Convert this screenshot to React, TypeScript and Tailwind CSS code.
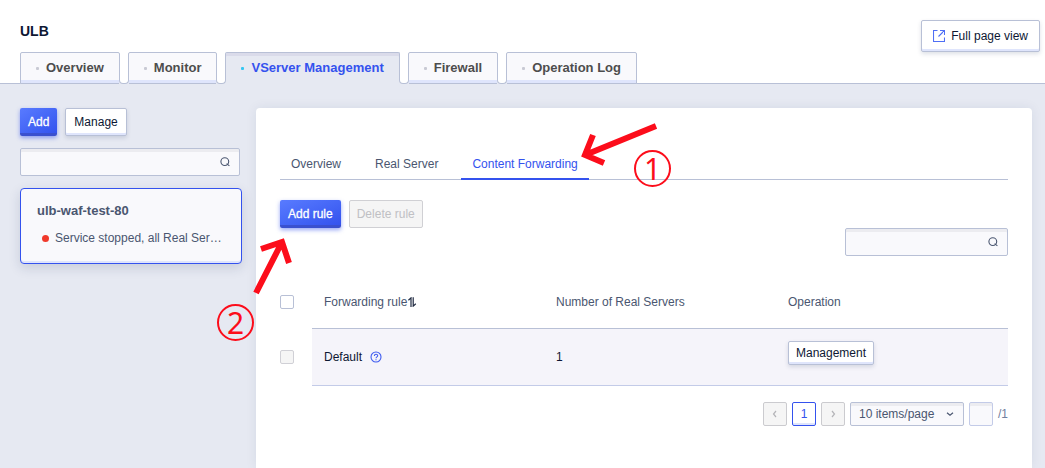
import { Fragment } from 'react';

const serverTabs = ['Overview', 'Monitor', 'VServer Management', 'Firewall', 'Operation Log'];
const detailTabs = ['Overview', 'Real Server', 'Content Forwarding'];

const primaryButton =
  'h-7 rounded-[2px] border-b-[3px] border-[#3a50cf] bg-linear-to-br from-[#597bff] to-[#3452ee] px-2 pt-[3px] font-medium text-white shadow-[0_2px_4px_rgba(52,82,238,0.5)] [-webkit-text-stroke:0.3px_white]';
const plainButton =
  'rounded-[2px] border border-[#b8c0d6] bg-white text-[#0d1733] shadow-[inset_0_-2px_0_#dfe5fc,0_2px_4px_rgba(30,45,90,0.15)]';

function SearchIcon() {
  return (
    <svg viewBox="0 0 12 12" className="size-3" fill="none" stroke="#4a5670" strokeWidth="1.1" aria-hidden="true">
      <circle cx="5.8" cy="5.6" r="3.9" />
      <path d="M7.6 7.6 10.4 9.9" />
    </svg>
  );
}

function SearchBox({ label, size }: { label: string; size: string }) {
  return (
    <div className={`relative flex h-7 ${size}`}>
      <input
        type="text"
        aria-label={label}
        className="h-7 w-full rounded-[2px] border border-[#b8c0d6] bg-[#f9f9fc] pr-7 pl-2 shadow-[inset_0_3px_0_#ececf0] outline-none"
      />
      <span className="absolute top-2 right-[9px]">
        <SearchIcon />
      </span>
    </div>
  );
}

function Notch() {
  return (
    <span className="z-10 -mx-px h-[5px] w-[10px] self-end bg-[#e6e9f2]" aria-hidden="true">
      <span className="block h-[5px] rounded-b-[4px] border border-t-0 border-[#b8c0d6] bg-white" />
    </span>
  );
}

function Header() {
  return (
    <header className="relative flex items-start justify-between border-b border-[#b8c0d6] bg-white pt-5 pr-[5px] pl-5">
      <div>
        <h1 className="h-8 text-[14px] leading-[22px] font-bold text-[#0d1733]">ULB</h1>
        <nav className="-mb-px flex h-8">
          {serverTabs.map((tab, i) => {
            const active = i === 2;
            return (
              <Fragment key={tab}>
                {i > 0 && <Notch />}
                <a
                  href="#"
                  className={
                    active
                      ? 'flex items-center rounded-t-[2px] border border-[#b8c0d6] border-b-[#e6e9f2] bg-[#e6e9f2] px-[15px] text-[13px] font-bold text-[#3452ee] shadow-[inset_0_3px_0_#dadbea]'
                      : 'flex items-center rounded-t-[2px] border border-[#b8c0d6] bg-[#f9f9fc] px-[15px] text-[13px] font-bold text-[#4d4d4d] shadow-[inset_0_-3px_0_#dfe5fc]'
                  }
                >
                  <span className={active ? 'mr-[7px] size-[3px] rounded-[1px] bg-[#34c6f2]' : 'mr-[7px] size-[3px] rounded-[1px] bg-[#c9cad4]'} />
                  {tab}
                </a>
              </Fragment>
            );
          })}
        </nav>
      </div>
      <button type="button" className={`${plainButton} flex h-8 items-center gap-[6px] px-[11px]`}>
        <svg viewBox="0 0 12 12" className="size-3" fill="none" stroke="#4f6ff5" strokeWidth="1.1" aria-hidden="true">
          <path d="M4.5.5h-4v11h11v-4M7 .5h4.5V5M11.5.5 5.5 6.5" />
        </svg>
        Full page view
      </button>
    </header>
  );
}

function Sidebar() {
  return (
    <aside className="flex w-[222px] shrink-0 flex-col gap-3">
      <div className="flex gap-2">
        <button type="button" className={primaryButton}>Add</button>
        <button type="button" className={`${plainButton} h-7 px-2`}>Manage</button>
      </div>
      <SearchBox label="Search VServer" size="w-[220px]" />
      <section className="h-[76px] rounded-[4px] border border-[#3452ee] bg-[#f9f9fc] px-4 pt-[13px] shadow-[inset_0_-2px_0_#dfe5fc,0_4px_12px_rgba(30,45,90,0.15)]">
        <h2 className="text-[13px] leading-[18px] font-bold text-[#4a5670]">ulb-waf-test-80</h2>
        <p className="mt-2 flex items-center gap-[6px] pl-[5px] leading-[20px] whitespace-nowrap text-[#4a5670]">
          <span className="size-[7px] shrink-0 rounded-full bg-[#f0392b]" />
          Service stopped, all Real Ser…
        </p>
      </section>
    </aside>
  );
}

function Rules() {
  return (
    <table className="mt-5 w-full table-fixed border-separate border-spacing-0 text-left">
      <colgroup>
        <col className="w-8" />
        <col />
        <col />
        <col />
      </colgroup>
      <thead>
        <tr className="h-[53px] text-[#4a5670]">
          <th className="pb-[2px]">
            <input type="checkbox" aria-label="Select all rules" className="block size-[14px] appearance-none rounded-[2px] border border-[#b8c0d6] bg-white" />
          </th>
          <th className="border-b border-[#b8c0d6] px-3 font-normal">
            <span className="flex items-center gap-px">
              Forwarding rule
              <svg viewBox="0 0 9 10" className="h-[10px] w-[9px]" fill="none" stroke="#1f2940" strokeWidth="1.2" aria-hidden="true">
                <path d="M.4 3.200 3 .9V10M5.200.3V9.100L7.800 6.800" />
              </svg>
            </span>
          </th>
          <th className="border-b border-[#b8c0d6] px-3 font-normal">Number of Real Servers</th>
          <th className="border-b border-[#b8c0d6] px-3 font-normal">Operation</th>
        </tr>
      </thead>
      <tbody>
        <tr className="h-[57px] text-[#0d1733]">
          <td className="pb-[2px]">
            <input type="checkbox" disabled aria-label="Select Default" className="block size-[14px] appearance-none rounded-[2px] border border-[#d0d0d6] bg-[#f5f5f5]" />
          </td>
          <td className="border-b border-[#c3cbe8] bg-[#f5f4fa] px-3">
            <span className="flex items-center gap-2">
              Default
              <svg viewBox="0 0 12 12" className="size-3" fill="none" stroke="#3f5cf0" strokeWidth="1.1" aria-hidden="true">
                <circle cx="6" cy="6" r="5" />
                <path d="M4.400 4.900c0-2.200 3.300-2.100 3.300-.2C7.700 5.900 6 5.800 6 7.300M6 8.200v1" />
              </svg>
            </span>
          </td>
          <td className="border-b border-[#c3cbe8] bg-[#f5f4fa] px-3">1</td>
          <td className="border-b border-[#c3cbe8] bg-[#f5f4fa] px-3 pb-2">
            <button type="button" className={`${plainButton} block h-6 px-[7px]`}>Management</button>
          </td>
        </tr>
      </tbody>
    </table>
  );
}

function Chevron({ d }: { d: string }) {
  return (
    <svg viewBox="0 0 8 8" className="size-2" fill="none" stroke="currentColor" strokeWidth="1.2" aria-hidden="true">
      <path d={d} />
    </svg>
  );
}

function Pagination() {
  const arrow = 'flex size-6 items-center justify-center rounded-[2px] border border-[#cbcbcf] bg-[#f5f5f5] text-[#b4b4b8]';
  return (
    <div className="mt-4 flex items-center justify-end gap-[5px]">
      <button type="button" disabled aria-label="Previous page" className={arrow}>
        <Chevron d="M5 1 2.500 4 5 7" />
      </button>
      <button type="button" className="size-6 rounded-[2px] border border-[#3452ee] bg-white text-[#3452ee] shadow-[inset_0_-2px_0_#dfe5fc]">1</button>
      <button type="button" disabled aria-label="Next page" className={arrow}>
        <Chevron d="M3 1 5.500 4 3 7" />
      </button>
      <div className="relative text-[#4a5670]">
        <select aria-label="Items per page" className="block h-6 w-[114px] appearance-none rounded-[2px] border border-[#b8c0d6] bg-[#f9f9fc] pl-2 shadow-[inset_0_3px_0_#ececf0]">
          <option>10 items/page</option>
          <option>20 items/page</option>
        </select>
        <span className="pointer-events-none absolute top-2 right-[10px]">
          <Chevron d="M1 2.800 4 5.300 7 2.800" />
        </span>
      </div>
      <input type="text" aria-label="Go to page" className="size-6 rounded-[2px] border border-[#c3cbe8] bg-[#f9f9fc] shadow-[inset_0_3px_0_#ececf0]" />
      <span className="text-[#7080a0]">/1</span>
    </div>
  );
}

function Marks() {
  const circle =
    'absolute flex size-[37px] items-center justify-center rounded-full border-2 border-[#fc0d1b] font-["Noto_Sans",sans-serif] text-[30px] leading-none text-[#fc0d1b]';
  return (
    <div className="pointer-events-none absolute top-0 left-0 z-20">
      <svg width="700" height="320" viewBox="0 0 700 320" className="max-w-none" fill="none" stroke="#fc0d1b" strokeWidth="6" aria-hidden="true">
        <path d="M656 126 585 155M593 135 585 155 604 163" />
        <path d="M256 293 282 242M261 249 282 242 289 263" />
      </svg>
      <span className={`${circle} top-[150px] left-[634px]`}>1</span>
      <span className={`${circle} top-[304px] left-[217px]`}>2</span>
    </div>
  );
}

export default function App() {
  return (
    <div className='relative flex min-h-screen flex-col bg-[#e6e9f2] font-["Liberation_Sans",Arial,sans-serif] text-[12px] leading-[18px]'>
      <Header />
      <main className="flex flex-1 gap-[14px] pt-6 pr-[13px] pl-5">
        <Sidebar />
        <section className="min-w-0 flex-1 rounded-t-[4px] bg-white px-6 pt-10 shadow-[0_0_12px_rgba(30,45,90,0.08)]">
          <nav className="flex h-8 border-b border-[#b8c0d6]">
            {detailTabs.map((tab, i) => (
              <a
                key={tab}
                href="#"
                className={
                  i === 2
                    ? 'flex h-8 items-center border-b-2 border-[#3452ee] px-[11px] pt-[2px] text-[#3452ee]'
                    : 'mr-3 flex h-8 items-center border-b-2 border-transparent px-[11px] pt-[2px] text-[#4a5670]'
                }
              >
                {tab}
              </a>
            ))}
          </nav>
          <div className="mt-5 flex gap-2">
            <button type="button" className={primaryButton}>Add rule</button>
            <button type="button" disabled className="h-7 rounded-[2px] border border-[#d0d0d4] bg-[#f5f5f5] px-[7px] text-[#c0c0c4]">
              Delete rule
            </button>
          </div>
          <div className="flex justify-end">
            <SearchBox label="Search rules" size="w-[163px]" />
          </div>
          <Rules />
          <Pagination />
        </section>
      </main>
      <Marks />
    </div>
  );
}
